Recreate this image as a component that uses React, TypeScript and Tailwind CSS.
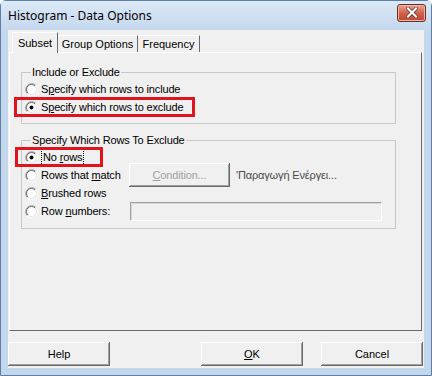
import React from "react";

const Radio = ({ checked }: { checked?: boolean }) => (
  <svg width="13" height="13" viewBox="0 0 13 13" className="shrink-0">
    <circle cx="6.5" cy="6.5" r="5" fill="#ffffff" />
    <path d="M2.26 10.74A6 6 0 0 1 10.74 2.26" fill="none" stroke="#a0a0a0" />
    <path d="M10.74 2.26A6 6 0 0 1 2.26 10.74" fill="none" stroke="#ffffff" />
    <path d="M2.96 10.04A5 5 0 0 1 10.04 2.96" fill="none" stroke="#696969" />
    <path d="M10.04 2.96A5 5 0 0 1 2.96 10.04" fill="none" stroke="#e3e3e3" />
    {checked && <circle cx="6.5" cy="6.5" r="2" fill="#000000" />}
  </svg>
);

const raised =
  "shadow-[inset_-1px_-1px_0_#696969,inset_1px_1px_0_#ffffff,inset_-2px_-2px_0_#a0a0a0]";

const Button = ({ children, className }: { children: React.ReactNode; className?: string }) => (
  <button
    type="button"
    className={`h-[24px] bg-[#f0f0f0] text-[11px] leading-[13px] ${raised} ${className ?? ""}`}
  >
    {children}
  </button>
);

const RadioRow = ({
  checked,
  children,
  className,
}: {
  checked?: boolean;
  children: React.ReactNode;
  className?: string;
}) => (
  <div className={`relative flex h-[18px] items-center gap-[3px] ${className ?? ""}`}>
    <Radio checked={checked} />
    {children}
  </div>
);

export default function App() {
  return (
    <div
      className="flex h-[376px] w-[432px] flex-col rounded-t-[6px] border border-[#5f7ea3] bg-[#c3d7ed] text-black"
      style={{ fontFamily: '"Liberation Sans", Arial, sans-serif' }}
    >
      {/* title bar */}
      <div className="flex h-[29px] items-center justify-between bg-gradient-to-b from-[#dce9f6] to-[#c5d8ee] pl-[7px] pr-[5px]">
        <span className="text-[12px] leading-[15px]" style={{ fontFamily: '"Noto Sans", sans-serif' }}>
          Histogram - Data Options
        </span>
        <div className="-mt-[6px] flex h-[18px] w-[29px] items-center justify-center rounded-[3px] border border-[#6b3029] bg-gradient-to-b from-[#e6a595] via-[#d0624c] to-[#c24530] shadow-[inset_0_0_0_1px_#efb3a6]">
          <svg width="12" height="11" viewBox="0 0 12 11">
            <path d="M2 1.5L10 9.5M10 1.5L2 9.5" stroke="#5a2a24" strokeWidth="3.6" strokeLinecap="square" />
            <path d="M2 1.5L10 9.5M10 1.5L2 9.5" stroke="#ffffff" strokeWidth="2.2" strokeLinecap="square" />
          </svg>
        </div>
      </div>

      {/* client */}
      <div className="mx-[7px] flex h-[338px] flex-col bg-[#f0f0f0]">
        {/* tabs */}
        <div className="flex h-[22px] items-end pl-[4px] pt-[2px] text-[11px] leading-[13px]">
          <div className="relative z-10 -mb-px flex h-[21px] w-[46px] items-center justify-center border-l border-t border-r border-l-white border-t-white border-r-[#696969] bg-[#f0f0f0]">
            Subset
          </div>
          <div className="flex h-[17px] w-[80px] items-center justify-center border-r border-t border-t-white border-r-[#696969]">
            Group Options
          </div>
          <div className="flex h-[17px] w-[62px] items-center justify-center border-r border-t border-t-white border-r-[#696969]">
            Frequency
          </div>
        </div>

        {/* tab panel */}
        <div className="ml-[1px] flex h-[279px] w-[413px] flex-col border border-l-white border-t-white border-r-[#696969] border-b-[#696969] px-[11px] pt-[13px] text-[11px] leading-[13px] tracking-[-0.15px]">
          <fieldset className="w-[375px] border border-[#c8c8c8] pb-[7px] pl-[3px]">
            <legend className="ml-[6px] px-[1px]">Include or Exclude</legend>
            <RadioRow className="mt-[1px]">
              <span>
                S<span className="underline">p</span>ecify which rows to include
              </span>
            </RadioRow>
            <RadioRow checked>
              <span>
                S<span className="underline">p</span>ecify which rows to exclude
              </span>
              <div className="absolute -left-[11px] -top-[1px] h-[20px] w-[181px] border-[3px] border-[#e0141c]" />
            </RadioRow>
          </fieldset>

          <fieldset className="mt-[10px] w-[375px] border border-[#c8c8c8] pb-[8px] pl-[3px]">
            <legend className="ml-[6px] px-[1px]">Specify Which Rows To Exclude</legend>
            <RadioRow checked className="mt-[1px]">
              <span className="border border-dotted border-black px-[1px] py-px">
                No <span className="underline">r</span>ows
              </span>
              <span className="w-[10px]" />
              <div className="absolute -left-[10px] -top-[1px] h-[20px] w-[88px] border-[3px] border-[#e0141c]" />
            </RadioRow>
            <RadioRow>
              <span className="w-[85px]">
                Rows that <span className="underline">m</span>atch
              </span>
              <Button className="w-[101px] text-[#a0a0a0]">
                <span className="underline">C</span>ondition...
              </Button>
              <span className="ml-[3px] text-[#4a4a4a]">'Παραγωγή Ενέργει...</span>
            </RadioRow>
            <RadioRow>
              <span>
                <span className="underline">B</span>rushed rows
              </span>
            </RadioRow>
            <RadioRow>
              <span className="w-[86px]">
                Row <span className="underline">n</span>umbers:
              </span>
              <div className="h-[19px] w-[252px] border border-t-[#a0a0a0] border-l-[#a0a0a0] border-r-white border-b-white bg-[#f0f0f0] shadow-[inset_1px_1px_0_#d8d8d8]" />
            </RadioRow>
          </fieldset>
        </div>

        {/* buttons */}
        <div className="mt-[11px] flex">
          <Button className="w-[102px]">Help</Button>
          <Button className="ml-[91px] w-[102px]">
            <span className="underline">O</span>K
          </Button>
          <Button className="ml-[18px] w-[102px]">Cancel</Button>
        </div>
      </div>
    </div>
  );
}
